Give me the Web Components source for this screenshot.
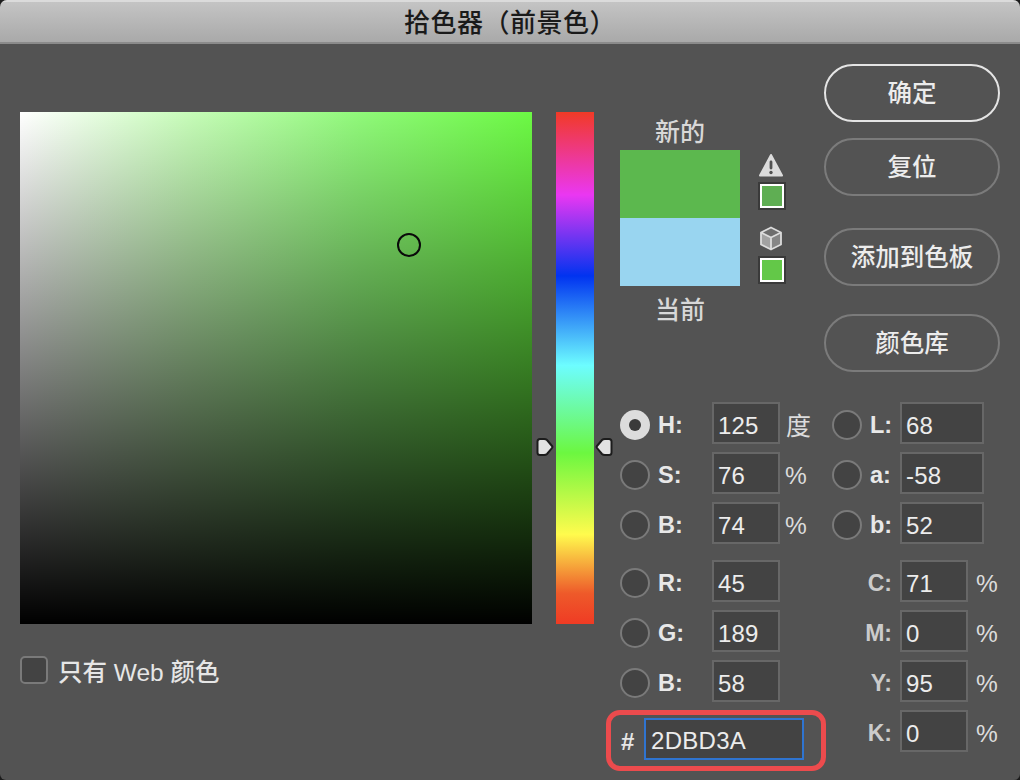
<!DOCTYPE html>
<html lang="zh">
<head>
<meta charset="utf-8">
<style>
  html, body { margin: 0; height: 100%; background: #1c1c1c; overflow: hidden; }
  body {
    font-family: "Liberation Sans", "Noto Sans CJK SC", sans-serif;
    color: #e6e6e6;
  }
</style>
</head>
<body>
<picker-dialog heading="拾色器（前景色）"></picker-dialog>

<script>
const FONT = `"Liberation Sans", "Noto Sans CJK SC", sans-serif`;

class PillButton extends HTMLElement {
  connectedCallback() {
    this.attachShadow({ mode: "open" }).innerHTML = `
      <style>
        :host {
          display: flex; align-items: center; justify-content: center;
          box-sizing: border-box; width: 176px; height: 58px; padding-bottom: 3px;
          border: 2px solid #7b7b7b; border-radius: 29px;
          font: 500 24.500px ${FONT}; color: #ececec;
        }
        :host([primary]) { border-color: #e4e4e4; }
      </style>
      <slot></slot>`;
  }
}
customElements.define("pill-button", PillButton);

class RadioDot extends HTMLElement {
  connectedCallback() {
    this.attachShadow({ mode: "open" }).innerHTML = `
      <style>
        :host {
          display: flex; align-items: center; justify-content: center;
          box-sizing: border-box; width: 30px; height: 30px; border-radius: 50%;
          border: 2px solid #7a7a7a; background: #434343; flex: none;
        }
        :host([on]) { border: none; background: #dcdcdc; }
        i { display: none; width: 12px; height: 12px; border-radius: 50%; background: #3a3a3a; }
        :host([on]) i { display: block; }
      </style>
      <i></i>`;
  }
}
customElements.define("radio-dot", RadioDot);

class ValueField extends HTMLElement {
  connectedCallback() {
    this.attachShadow({ mode: "open" }).innerHTML = `
      <style>
        :host {
          display: flex; align-items: center; box-sizing: border-box;
          width: var(--w, 68px); height: 42px; padding: 6px 0 0 4px; flex: none;
          border: 2px solid #676767; background: #434343;
          font: 24px ${FONT}; letter-spacing: .2px; color: #ececec;
        }
        :host([focus]) { border-color: #2f74d0; padding: 4px 0 0 5px; letter-spacing: .3px; }
      </style>
      <slot></slot>`;
  }
}
customElements.define("value-field", ValueField);

// one line of the numeric block: optional radio, label, box, unit
class ValueRow extends HTMLElement {
  connectedCallback() {
    const radio = this.hasAttribute("radio");
    const on = this.hasAttribute("on") ? "on" : "";
    const unit = this.getAttribute("unit") || "";
    this.attachShadow({ mode: "open" }).innerHTML = `
      <style>
        :host { display: flex; align-items: center; height: 42px; font: 24px ${FONT}; color: #ececec; }
        radio-dot, .label { margin-top: 4px; }
        .label { font-weight: 700; font-size: 23.500px; color: #e8e8e8; width: var(--label, 54px); flex: none; padding-left: 8px; box-sizing: border-box; }
        :host(:not([radio])) .label { text-align: right; padding: 0 8px 0 0; color: #cbcbcb; font-size: 23px; }
        .unit { margin-top: 6px; padding-left: var(--unit-pad, 5px); flex: none; font-size: 24.500px; color: #dcdcdc; white-space: nowrap; }
        .unit.cjk { margin-top: 2px; padding-left: 6px; font-size: 25px; }
        value-field { --w: var(--field, 68px); }
      </style>
      ${radio ? `<radio-dot ${on}></radio-dot>` : ""}
      <span class="label">${this.getAttribute("label")}</span>
      <value-field>${this.getAttribute("value")}</value-field>
      ${unit ? `<span class="unit ${unit === "度" ? "cjk" : ""}">${unit}</span>` : ""}`;
  }
}
customElements.define("value-row", ValueRow);

class ColorField extends HTMLElement {
  connectedCallback() {
    this.attachShadow({ mode: "open" }).innerHTML = `
      <style>
        :host {
          display: block; position: relative; width: 512px; height: 512px;
          background:
            linear-gradient(to bottom, rgba(0,0,0,0), #000),
            linear-gradient(to right, #fff, #c6fcb8 33%, #90f97a 66%, #6cf944);
        }
        i {
          position: absolute; left: 377px; top: 121px; width: 24px; height: 24px;
          box-sizing: border-box; border: 2px solid #0a0a0a; border-radius: 50%;
        }
      </style>
      <i></i>`;
  }
}
customElements.define("color-field", ColorField);

class HueStrip extends HTMLElement {
  connectedCallback() {
    const arrow = `<path d="M4 2h4q2 0 3 1l5 6q.8 1 0 2l-5 6q-1 1-3 1H4q-2.500 0-2.500-2.500v-11Q1.500 2 4 2z" fill="#e2e2e2" stroke="#1c1c1c" stroke-width="2" stroke-linejoin="round"/>`;
    this.attachShadow({ mode: "open" }).innerHTML = `
      <style>
        :host {
          display: block; position: relative; width: 38px; height: 512px; flex: none;
          background: linear-gradient(to bottom,
            #f13a26 0%, #ea37f2 16.200%, #0133f0 32%, #6dfdff 49.500%,
            #6cf740 66.600%, #fffb4d 82.500%, #ee5a2a 94%, #ef3b24 100%);
        }
        svg { position: absolute; top: 325px; width: 18px; height: 20px; }
        .l { left: -20px; }
        .r { right: -19px; transform: scaleX(-1); }
      </style>
      <svg class="l" viewBox="0 0 18 20">${arrow}</svg>
      <svg class="r" viewBox="0 0 18 20">${arrow}</svg>`;
  }
}
customElements.define("hue-strip", HueStrip);

class ChipSwatch extends HTMLElement {
  connectedCallback() {
    this.attachShadow({ mode: "open" }).innerHTML = `
      <style>
        :host {
          display: block; box-sizing: border-box; width: 28px; height: 28px;
          border: 2px solid #3a3a3a; background: #fff; padding: 2px;
        }
        i { display: block; width: 100%; height: 100%; background: var(--c); }
      </style>
      <i></i>`;
  }
}
customElements.define("chip-swatch", ChipSwatch);

class ColorCompare extends HTMLElement {
  connectedCallback() {
    this.attachShadow({ mode: "open" }).innerHTML = `
      <style>
        :host { display: block; width: 170px; font: 500 25px ${FONT}; color: #d8d8d8; }
        .cap { width: 120px; text-align: center; height: 30px; line-height: 30px; }
        .row { display: flex; gap: 18px; margin: 3px 0 9px; }
        .box { width: 120px; height: 136px; flex: none;
               background: linear-gradient(#5cb84e 0 50%, #99d5f0 50% 100%); }
        .side { width: 28px; display: flex; flex-direction: column; padding-top: 3px; }
        svg { display: block; }
        .warn { width: 24px; height: 24px; margin: 0 0 5px 1px; }
        .cube { width: 22px; height: 25px; margin: 16px 0 5px 2px; }
      </style>
      <div class="cap">新的</div>
      <div class="row">
        <div class="box"></div>
        <div class="side">
          <svg class="warn" viewBox="0 0 24 24">
            <path d="M12 2 L23 22.500 H1 Z" fill="#dcdcdc" stroke="#dcdcdc" stroke-width="2" stroke-linejoin="round"/>
            <rect x="10.600" y="7.500" width="2.800" height="9" rx="1.400" fill="#535353"/>
            <circle cx="12" cy="19.500" r="1.700" fill="#535353"/>
          </svg>
          <chip-swatch style="--c:#5fae53"></chip-swatch>
          <svg class="cube" viewBox="0 0 22 25">
            <path d="M11 1.500 L21 6.500 V18.500 L11 23.500 L1 18.500 V6.500 Z" fill="#868686"/>
            <path d="M1 6.500 L11 11.500 V23.500 L1 18.500 Z" fill="#a2a2a2"/>
            <path d="M11 1.500 L21 6.500 L11 11.500 L1 6.500 Z" fill="#6e6e6e"/>
            <path d="M11 1.500 L21 6.500 V18.500 L11 23.500 L1 18.500 V6.500 Z M1 6.500 L11 11.500 L21 6.500 M11 11.500 V23.500" fill="none" stroke="#dcdcdc" stroke-width="1.800" stroke-linejoin="round"/>
          </svg>
          <chip-swatch style="--c:#63c848"></chip-swatch>
        </div>
      </div>
      <div class="cap">当前</div>`;
  }
}
customElements.define("color-compare", ColorCompare);

class PickerDialog extends HTMLElement {
  connectedCallback() {
    this.attachShadow({ mode: "open" }).innerHTML = `
      <style>
        :host { display: block; width: 1020px; height: 780px; background: #1c1c1c; }
        .window { position: relative; height: 100%; background: #535353; border-radius: 7px 7px 6px 6px; overflow: hidden; }
        .title {
          box-sizing: border-box; height: 44px; display: flex; align-items: center; justify-content: center;
          border-top: 2px solid #dbdbdb; border-bottom: 2px solid #8b8b8b; padding-bottom: 3px;
          background: linear-gradient(#c4c4c4, #a9a9a9);
          font: 500 26px ${FONT}; letter-spacing: .5px; color: #1a1a1a;
        }
        main { display: flex; padding: 68px 0 0 20px; }
        .left { width: 512px; flex: none; }
        .web { display: flex; align-items: center; gap: 10px; height: 28px; margin-top: 32px; font: 500 24.500px ${FONT}; color: #e6e6e6; }
        .box { box-sizing: border-box; width: 28px; height: 28px; border: 2px solid #7a7a7a; border-radius: 5px; background: #434343; }
        hue-strip { margin-left: 24px; }
        .right { position: relative; margin-left: 26px; width: 380px; }
        color-compare { margin-top: 5px; }
        .buttons { position: absolute; left: 204px; top: -48px; display: flex; flex-direction: column; }
        .numbers { position: absolute; left: 0; top: 290px; width: 380px; display: grid; row-gap: 16px; }
        .stack { display: grid; grid-auto-rows: 42px; row-gap: 8px; }
        .columns { display: flex; align-items: flex-start; }
        .hsb { width: 212px; --label: 62px; }
        .lab { --label: 38px; --field: 84px; }
        .rgb { width: 212px; --label: 62px; }
        .cmyk { --label: 68px; --unit-pad: 8px; }
      </style>
      <div class="window">
        <div class="title">${this.getAttribute("heading")}</div>
        <main>
          <div class="left">
            <color-field></color-field>
            <div class="web"><span class="box"></span><span>只有 Web 颜色</span></div>
          </div>
          <hue-strip></hue-strip>
          <div class="right">
            <color-compare></color-compare>
            <div class="buttons">
              <pill-button primary>确定</pill-button>
              <pill-button style="margin-top:16px">复位</pill-button>
              <pill-button style="margin-top:32px">添加到色板</pill-button>
              <pill-button style="margin-top:28px">颜色库</pill-button>
            </div>
            <div class="numbers">
              <div class="columns">
                <div class="hsb stack">
                  <value-row radio on label="H:" value="125" unit="度"></value-row>
                  <value-row radio label="S:" value="76" unit="%"></value-row>
                  <value-row radio label="B:" value="74" unit="%"></value-row>
                </div>
                <div class="lab stack">
                  <value-row radio label="L:" value="68"></value-row>
                  <value-row radio label="a:" value="-58"></value-row>
                  <value-row radio label="b:" value="52"></value-row>
                </div>
              </div>
              <div class="columns">
                <div class="rgb stack">
                  <value-row radio label="R:" value="45"></value-row>
                  <value-row radio label="G:" value="189"></value-row>
                  <value-row radio label="B:" value="58"></value-row>
                </div>
                <div class="cmyk stack">
                  <value-row label="C:" value="71" unit="%"></value-row>
                  <value-row label="M:" value="0" unit="%"></value-row>
                  <value-row label="Y:" value="95" unit="%"></value-row>
                  <value-row label="K:" value="0" unit="%"></value-row>
                </div>
              </div>
            </div>
          </div>
        </main>
        <hex-entry value="2DBD3A"></hex-entry>
      </div>`;
  }
}
customElements.define("picker-dialog", PickerDialog);

// the red ring is an annotation lying over the dialog
class HexEntry extends HTMLElement {
  connectedCallback() {
    this.attachShadow({ mode: "open" }).innerHTML = `
      <style>
        :host {
          position: absolute; left: 606px; top: 710px; width: 220px; height: 61px; box-sizing: border-box;
          border: 5px solid #ec4b4d; border-radius: 14px;
          display: flex; align-items: center; padding: 0 0 3px 10px;
          font: 700 24px ${FONT}; color: #e6e6e6;
        }
        span { width: 23px; margin-top: 5px; }
        value-field { --w: 160px; }
      </style>
      <span>#</span><value-field focus>${this.getAttribute("value")}</value-field>`;
  }
}
customElements.define("hex-entry", HexEntry);
</script>
</body>
</html>
